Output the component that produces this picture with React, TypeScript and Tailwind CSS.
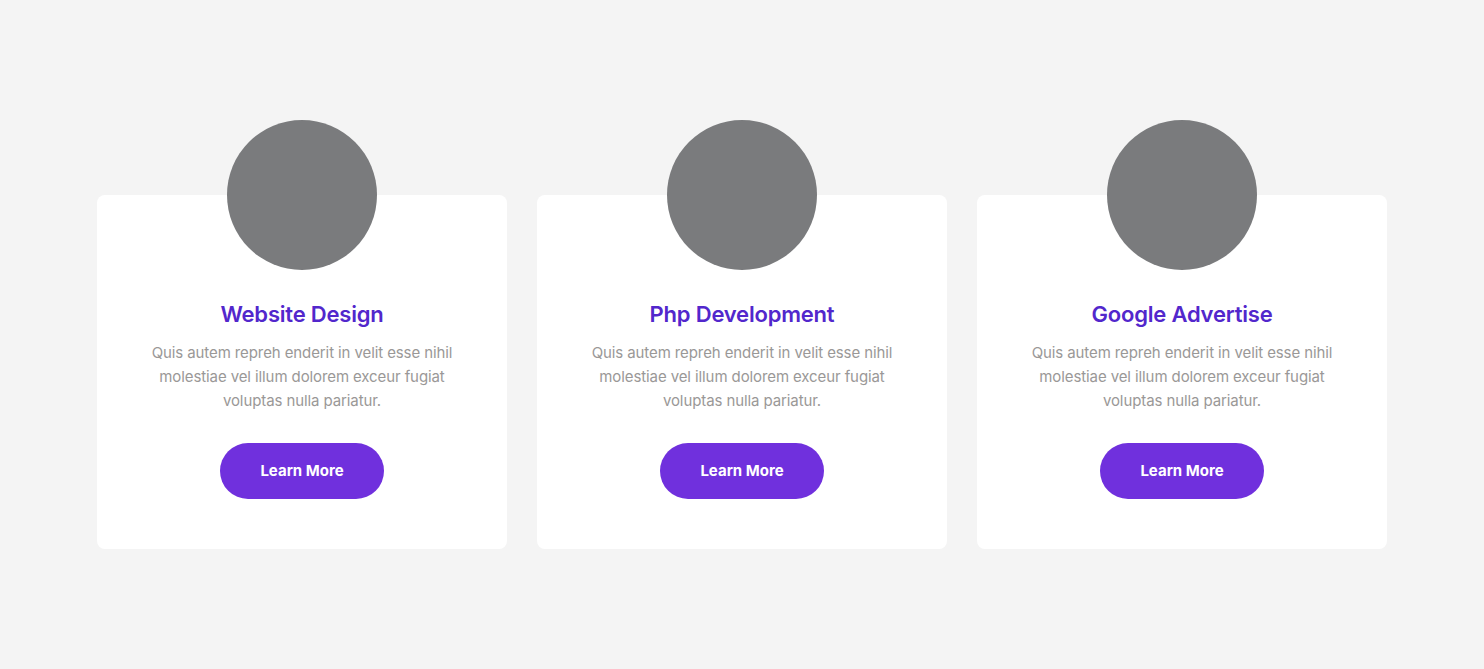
import React from "react";

const services = [
  { title: "Website Design" },
  { title: "Php Development" },
  { title: "Google Advertise" },
];

const ServiceCard = ({ title }: { title: string }) => (
  <div className="mt-[75px] flex w-[410px] flex-col items-center rounded-lg bg-white px-10 pb-[50px] text-center">
    <div className="-mt-[75px] h-[150px] w-[150px] rounded-full bg-[#7a7b7d]" />
    <h3 className="mt-[29px] text-[22px] leading-[30px] font-semibold tracking-[-0.2px] text-[#5227cc]">
      {title}
    </h3>
    <p className="mt-3 w-[320px] text-[15px] leading-6 tracking-[-0.1px] text-[#9a9897]">
      Quis autem repreh enderit in velit esse nihil molestiae vel illum dolorem
      exceur fugiat voluptas nulla pariatur.
    </p>
    <button className="mt-[30px] h-14 w-[164px] rounded-full bg-[#7030dd] pt-px text-[15px] font-bold text-white">
      Learn More
    </button>
  </div>
);

const App = () => {
  return (
    <div
      className="flex min-h-screen w-full justify-center bg-[#f4f4f4] pt-[45px]"
      style={{ fontFamily: "Inter, 'Noto Sans', sans-serif" }}
    >
      <div className="flex items-start gap-[30px] pt-[75px]">
        {services.map((s) => (
          <ServiceCard key={s.title} title={s.title} />
        ))}
      </div>
    </div>
  );
};

export default App;
